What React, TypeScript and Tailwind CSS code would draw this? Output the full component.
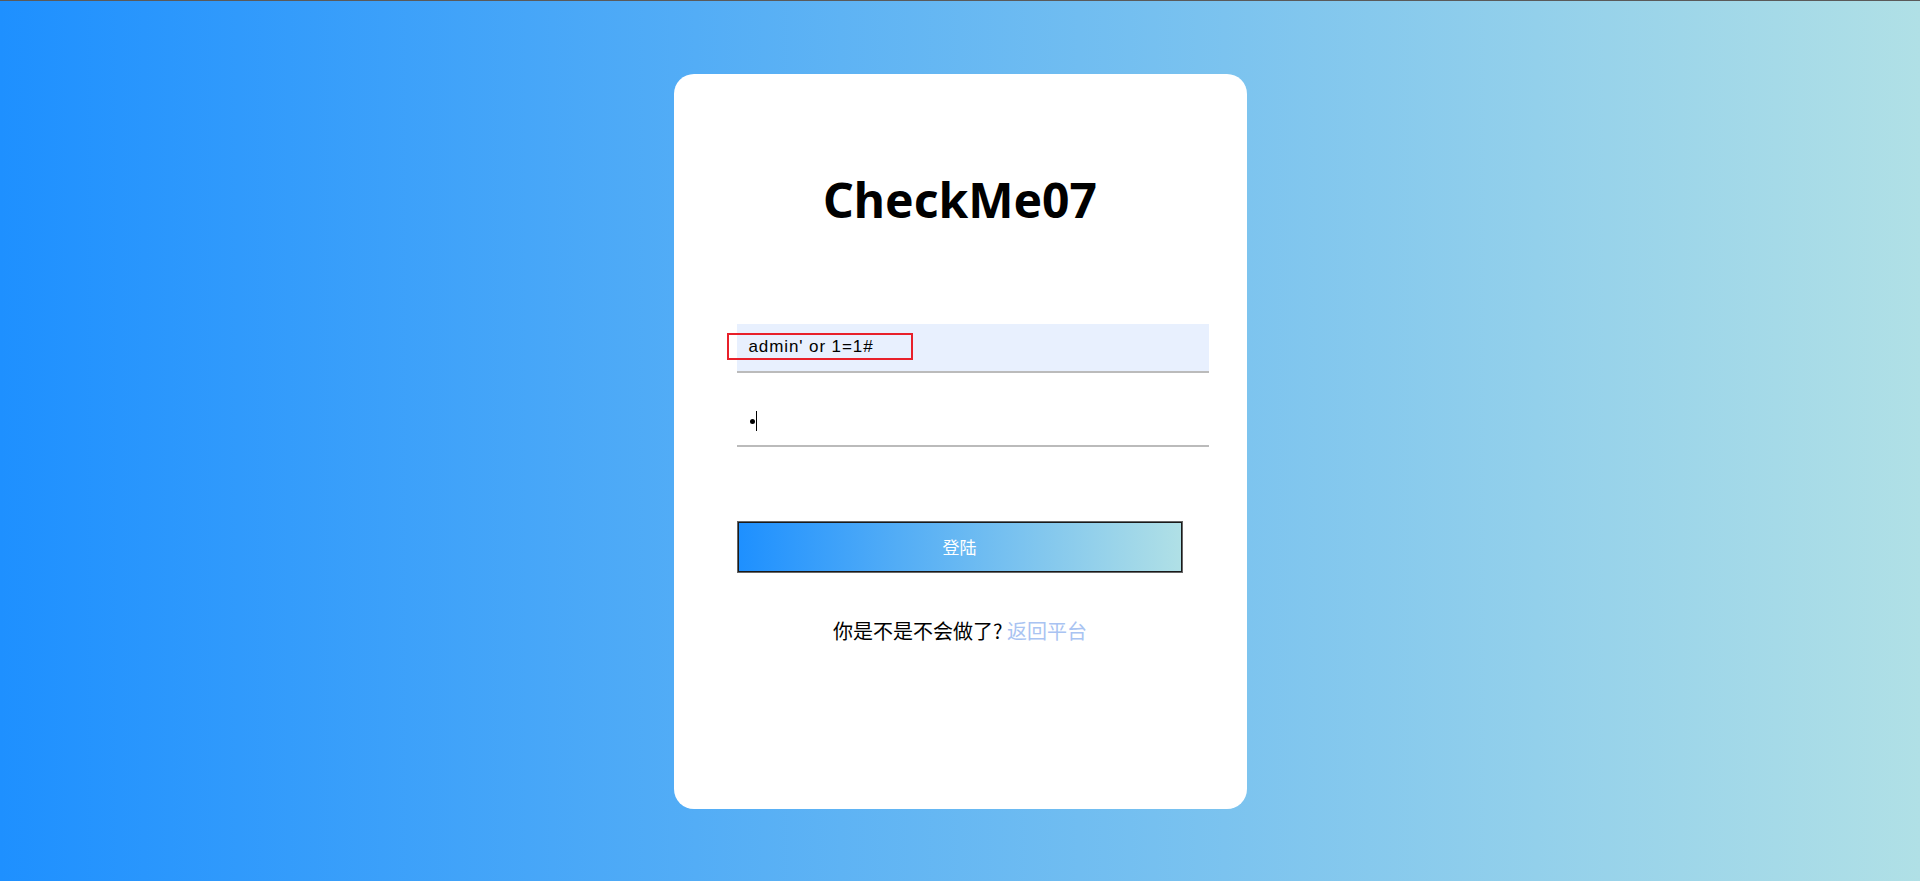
export default function App() {
  return (
    <main className="w-full h-[881px] border-t border-[#5a5a5a] flex items-center justify-center bg-[linear-gradient(to_right,#1e90ff,#b0e0e6)] overflow-hidden">
      {/* card */}
      <div className="w-[573px] h-[735px] bg-white rounded-[20px] flex flex-col pl-[63px] pr-[38px]">
        <h1 className="mt-[96px] -ml-[63px] -mr-[38px] h-[60px] leading-[60px] text-center text-[48px] font-bold text-black font-['Noto_Sans',sans-serif]">
          CheckMe07
        </h1>

        {/* username */}
        <div className="relative mt-[94px] h-[49px] bg-[#e8f0fe] border-b-2 border-[#bbbbbb] flex items-center pl-[12px]">
          <span className="text-[17px] tracking-[0.9px] text-black font-['Liberation_Sans',Arial,sans-serif]">admin' or 1=1#</span>
          <div className="absolute left-[-10px] top-[9px] w-[186px] h-[27px] border-2 border-[#e8202a]"></div>
        </div>

        {/* password */}
        <div className="mt-[25px] h-[49px] bg-white border-b-2 border-[#bbbbbb] flex items-center pl-[13px]">
          <span className="w-[5px] h-[5px] rounded-full bg-black"></span>
          <span className="ml-[1px] w-px h-[20px] bg-black"></span>
        </div>

        {/* button */}
        <button className="mt-[74px] w-[446px] h-[52px] border-2 border-[#1a1a1a] outline outline-1 outline-[#666] -outline-offset-1 bg-[linear-gradient(to_right,#1e90ff,#b0e0e6)] text-white text-[17px] font-['Noto_Sans_CJK_SC',sans-serif]">
          登陆
        </button>

        <p className="mt-[44px] -ml-[63px] -mr-[38px] leading-[28px] text-center text-[20px] text-black font-['Noto_Sans_CJK_SC',sans-serif]">
          你是不是不会做了? <a className="text-[#a9c3f2]">返回平台</a>
        </p>
      </div>
    </main>
  );
}
